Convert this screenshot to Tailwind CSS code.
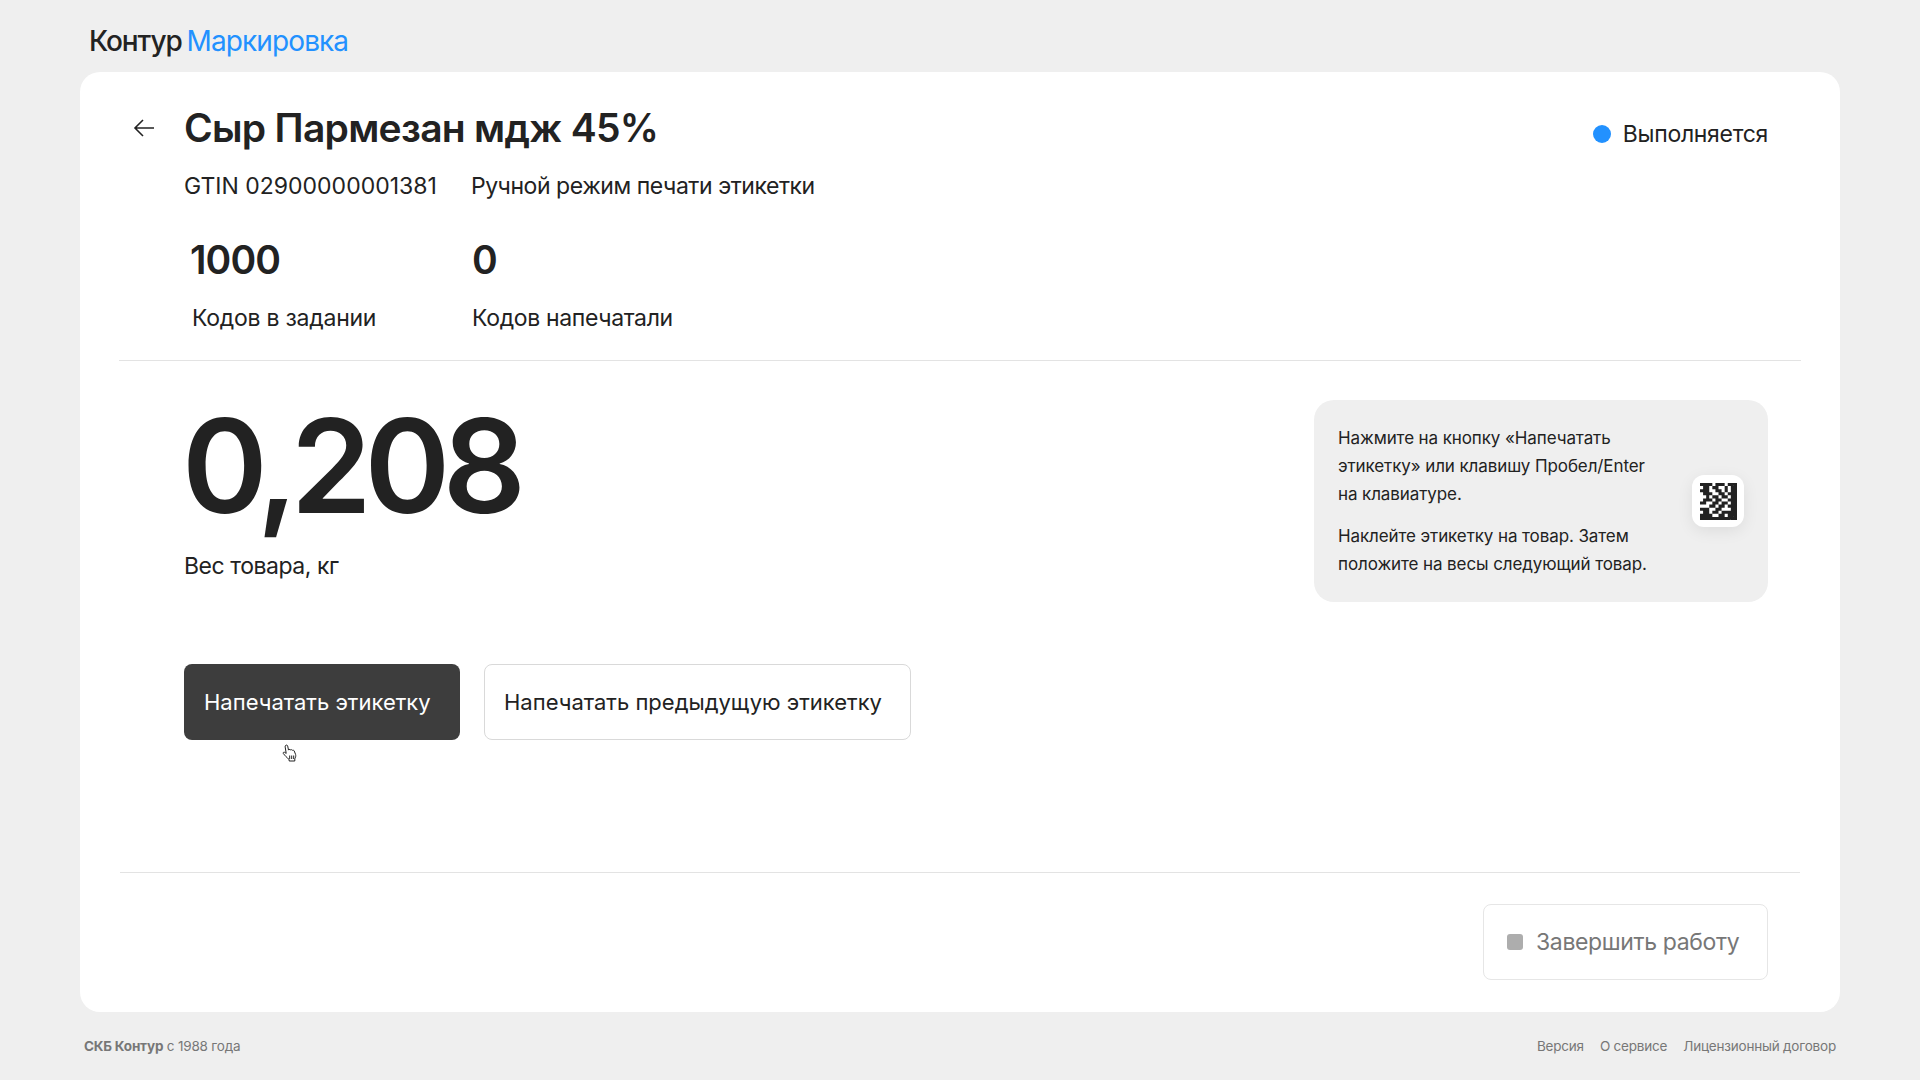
<!DOCTYPE html>
<html lang="ru">
<head>
  <meta charset="UTF-8">
  <title>Контур Маркировка</title>
  <script src="https://cdn.jsdelivr.net/npm/@tailwindcss/browser@4"></script>
</head>
<body class="bg-[#efefef] text-[#222222] font-['Inter',sans-serif] h-[1080px] w-[1920px] overflow-hidden relative">

  <!-- Header -->
  <header class="h-[72px] pl-[89px] flex items-center text-[28px] leading-[36px] tracking-[-0.9px] pt-[10px]">
    <span class="font-medium tracking-[-1.1px]">Контур</span>
    <span class="ml-[5px] text-[#2291ff]">Маркировка</span>
  </header>

  <!-- Card -->
  <main class="mx-[80px] h-[940px] bg-white rounded-[20px] flex flex-col">

    <!-- Task info -->
    <section class="mx-[39px] h-[289px] border-b border-[#e3e3e3] relative shrink-0">
      <div class="flex items-center pt-[32px] pl-[14px]">
        <svg class="w-[22px] h-[20px] mr-[29px] shrink-0" viewBox="0 0 22 20" fill="none" stroke="#222222" stroke-width="1.6">
          <path d="M21 10H2M10 2L2 10l8 8"/>
        </svg>
        <h1 class="text-[39px] leading-[48px] font-semibold tracking-[-0.72px]">Сыр Пармезан мдж 45%</h1>
      </div>
      <div class="flex pl-[65px] mt-[20px] text-[23px] leading-[28px]">
        <span class="w-[287px]">GTIN 02900000001381</span>
        <span class="tracking-[-0.45px]">Ручной режим печати этикетки</span>
      </div>
      <div class="flex mt-[36px] pl-[65px]">
        <div class="w-[288px]">
          <div class="pl-[6px] text-[39px] leading-[48px] font-semibold tracking-[-0.9px]">1000</div>
          <div class="pl-[8px] mt-[20px] text-[23px] leading-[28px] tracking-[-0.25px]">Кодов в задании</div>
        </div>
        <div>
          <div class="text-[39px] leading-[48px] font-semibold">0</div>
          <div class="mt-[20px] text-[23px] leading-[28px] tracking-[-0.35px]">Кодов напечатали</div>
        </div>
      </div>
      <div class="absolute top-[46px] right-[33px] flex items-center text-[23px] leading-[32px] tracking-[-0.3px]">
        <span class="w-[18px] h-[18px] rounded-full bg-[#2291ff] mr-[12px]"></span>
        Выполняется
      </div>
    </section>

    <!-- Weight and print -->
    <section class="mx-[40px] h-[512px] border-b border-[#e3e3e3] pl-[64px] pr-[32px] shrink-0 flex justify-between">
      <div>
        <div class="mt-[30px] -ml-[2px] text-[130px] leading-[150px] font-semibold tracking-[-7.4px]">0,208</div>
        <div class="mt-[11px] text-[23px] leading-[28px] tracking-[-0.45px]">Вес товара, кг</div>
        <div class="flex gap-[24px] mt-[84px]">
          <button class="w-[276px] h-[76px] rounded-[8px] bg-[#3d3d3d] text-white text-[22px] text-left pl-[20px]">Напечатать этикетку</button>
          <button class="w-[427px] h-[76px] rounded-[8px] bg-white border border-[#d9d9d9] text-[22px] text-left pl-[19px]">Напечатать предыдущую этикетку</button>
        </div>
      </div>
      <aside class="mt-[39px] w-[454px] h-[202px] bg-[#efefef] rounded-[20px] flex items-center pl-[24px] pr-[24px] justify-between text-[17px] leading-[28px] tracking-[-0.1px]">
        <div>
          <p>Нажмите на кнопку «Напечатать<br>этикетку» или клавишу Пробел/Enter<br>на клавиатуре.</p>
          <p class="mt-[14px]">Наклейте этикетку на товар. Затем<br>положите на весы следующий товар.</p>
        </div>
        <div class="w-[52px] h-[52px] rounded-[12px] bg-white shadow-[0_4px_16px_rgba(0,0,0,0.08)] flex items-center justify-center shrink-0">
          <svg class="w-[37px] h-[37px]" viewBox="0 0 12 12" fill="#222222">
            <path id="codeCells"/>
          </svg>
        </div>
      </aside>
    </section>

    <!-- Finish -->
    <section class="flex justify-end pt-[31px] pr-[72px]">
      <button class="w-[285px] h-[76px] rounded-[8px] border border-[#e6e6e6] flex items-center pl-[23px] text-[23px] text-[#777777] tracking-[-0.37px]">
        <span class="w-[16px] h-[16px] rounded-[3px] bg-[#adadad] mr-[13px]"></span>
        Завершить работу
      </button>
    </section>
  </main>

  <!-- Footer -->
  <footer class="flex justify-between px-[84px] pt-[24px] text-[13.5px] leading-[20px] text-[#777777] tracking-[-0.2px]">
    <div><b class="font-bold">СКБ Контур</b> с 1988 года</div>
    <div class="flex gap-[16px]">
      <span>Версия</span>
      <span>О сервисе</span>
      <span>Лицензионный договор</span>
    </div>
  </footer>

  <!-- Mouse pointer -->
  <svg class="absolute left-[282px] top-[744px] w-[16px] h-[19px]" viewBox="0 0 16 19" fill="#ffffff" stroke="#222222" stroke-width="1">
    <path d="M3.5 1.5c.8-.8 2-.4 2.2.6l.8 4 .6-.6c.6-.3 1.3-.1 1.6.4.6-.4 1.4-.2 1.7.4.7-.3 1.5 0 1.8.6l1.4 3.6c.4 1.5 0 3-.8 4.3v2.2H7.2l-.1-1.6C5 14 3 11.5 1.3 9.5c-.5-.8.4-1.7 1.3-1.2l1.6 1.1-1-6.3c-.1-.8 0-1.3.3-1.6z"/>
    <path d="M7.7 11.5v3.5M9.7 11.5v3.5M11.7 11.5v3.5" fill="none"/>
  </svg>

  <script>
    // Клетки кода: 1 = чёрная
    const rows = [
      '111101110111',
      '011011001011',
      '111001101011',
      '011100110111',
      '001011011011',
      '011101100111',
      '110011011011',
      '000110110111',
      '111001100011',
      '011011011111',
      '111100110111',
      '111111111111'
    ];
    let d = '';
    rows.forEach((row, y) => {
      [...row].forEach((cell, x) => {
        if (cell === '1') d += `M${x} ${y}h1v1h-1z`;
      });
    });
    document.getElementById('codeCells').setAttribute('d', d);
  </script>
</body>
</html>
